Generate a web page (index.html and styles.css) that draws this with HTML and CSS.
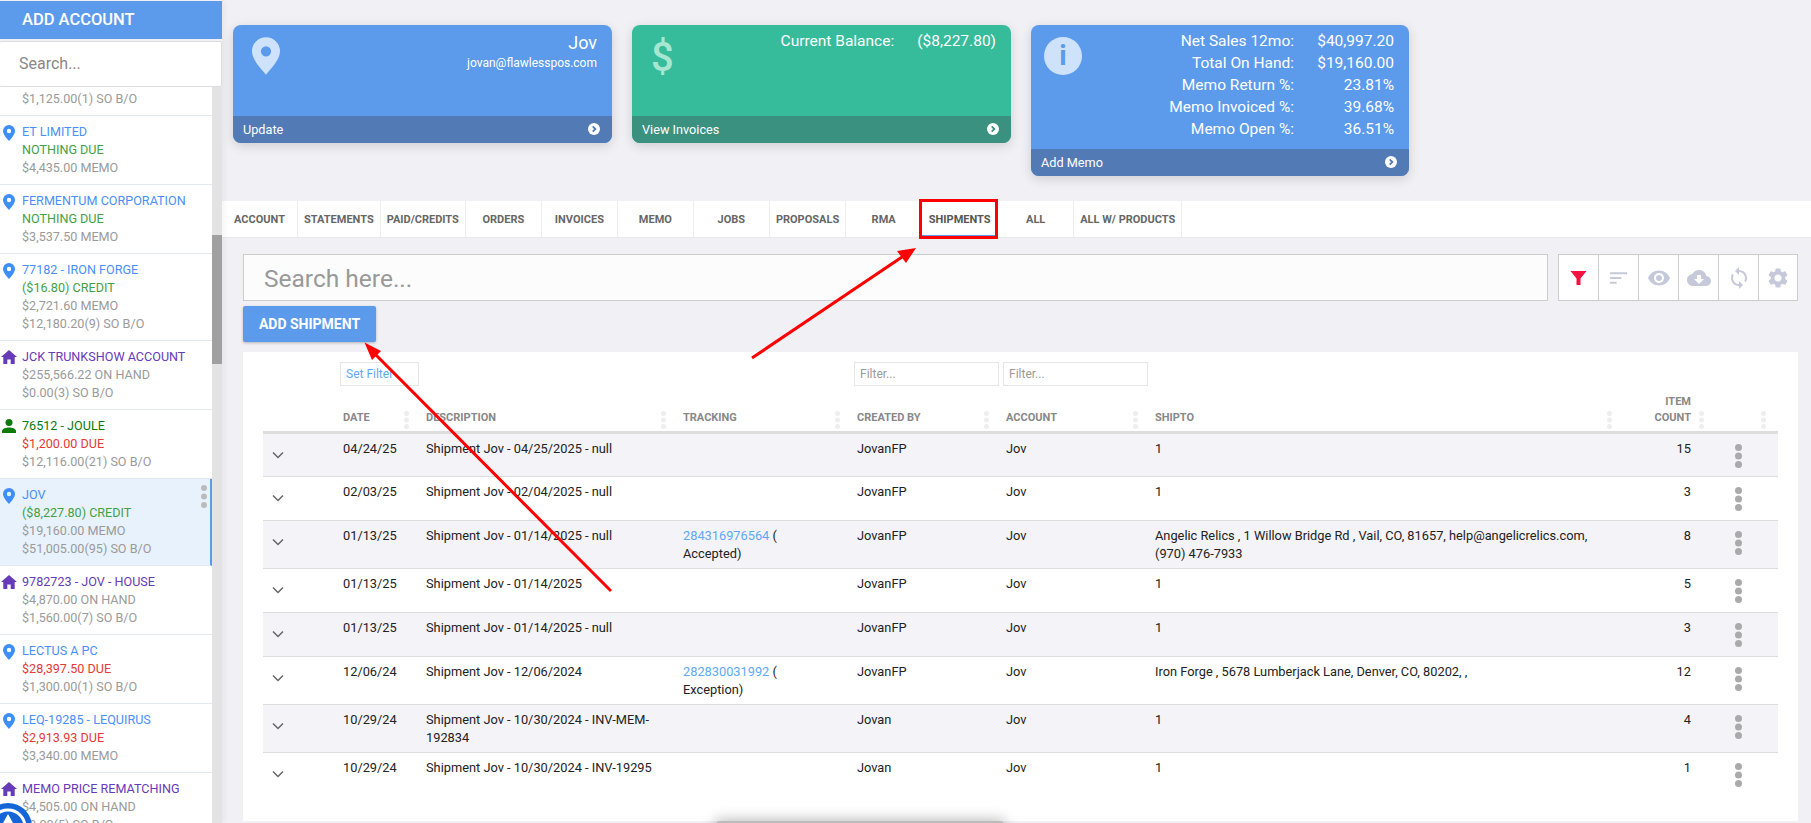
FILE: index.html
```html
<!DOCTYPE html>
<html lang="en">
<head>
<meta charset="utf-8">
<title>Shipments</title>
<link rel="stylesheet" href="styles.css">
</head>
<body>
<svg class="defs" width="0" height="0" aria-hidden="true">
  <symbol id="pin" viewBox="0 0 12 16"><path fill-rule="evenodd" d="M6 0a6 6 0 0 0-6 6c0 3.6 4 7.6 6 10 2-2.4 6-6.4 6-10a6 6 0 0 0-6-6zm0 3.8a2.2 2.2 0 1 1 0 4.4 2.2 2.2 0 0 1 0-4.4z"/></symbol>
  <symbol id="house" viewBox="0 0 16 14"><path d="M8 0 0 7h2.300v7h4V9.500h3.400V14h4V7H16z"/></symbol>
  <symbol id="person" viewBox="0 0 16 14"><circle cx="8" cy="3.500" r="3.500"/><path d="M1 14v-2c0-2.500 4.500-3.500 7-3.500s7 1 7 3.500v2z"/></symbol>
  <symbol id="go" viewBox="0 0 12 12"><circle cx="6" cy="6" r="6" fill="#fff"/><path d="M4.700 3.300 7.400 6 4.700 8.700" fill="none" stroke="currentColor" stroke-width="1.800"/></symbol>
  <symbol id="chev" viewBox="0 0 12 8"><path d="M1 1.500 6 6.500 11 1.500" fill="none" stroke="#666" stroke-width="1.500"/></symbol>
</svg>

<div class="app">
  <aside class="side">
    <div class="side-add">ADD ACCOUNT</div>
    <div class="side-search">Search...</div>
    <div class="side-body">
      <ul class="acct-list">
        <li class="acct acct-cut"><span class="g">$1,125.00(1) SO B/O</span></li>
        <li class="acct"><svg class="ai pin"><use href="#pin"/></svg><span class="b">ET LIMITED</span><span class="n">NOTHING DUE</span><span class="g">$4,435.00 MEMO</span></li>
        <li class="acct"><svg class="ai pin"><use href="#pin"/></svg><span class="b">FERMENTUM CORPORATION</span><span class="n">NOTHING DUE</span><span class="g">$3,537.50 MEMO</span></li>
        <li class="acct"><svg class="ai pin"><use href="#pin"/></svg><span class="b">77182 - IRON FORGE</span><span class="n">($16.80) CREDIT</span><span class="g">$2,721.60 MEMO</span><span class="g">$12,180.20(9) SO B/O</span></li>
        <li class="acct"><svg class="ai home"><use href="#house"/></svg><span class="p">JCK TRUNKSHOW ACCOUNT</span><span class="g">$255,566.22 ON HAND</span><span class="g">$0.00(3) SO B/O</span></li>
        <li class="acct"><svg class="ai user"><use href="#person"/></svg><span class="dg">76512 - JOULE</span><span class="r">$1,200.00 DUE</span><span class="g">$12,116.00(21) SO B/O</span></li>
        <li class="acct active"><svg class="ai pin"><use href="#pin"/></svg><span class="b">JOV</span><span class="n">($8,227.80) CREDIT</span><span class="g">$19,160.00 MEMO</span><span class="g">$51,005.00(95) SO B/O</span><i class="acct-dots"></i></li>
        <li class="acct"><svg class="ai home"><use href="#house"/></svg><span class="p">9782723 - JOV - HOUSE</span><span class="g">$4,870.00 ON HAND</span><span class="g">$1,560.00(7) SO B/O</span></li>
        <li class="acct"><svg class="ai pin"><use href="#pin"/></svg><span class="b">LECTUS A PC</span><span class="r">$28,397.50 DUE</span><span class="g">$1,300.00(1) SO B/O</span></li>
        <li class="acct"><svg class="ai pin"><use href="#pin"/></svg><span class="b">LEQ-19285 - LEQUIRUS</span><span class="r">$2,913.93 DUE</span><span class="g">$3,340.00 MEMO</span></li>
        <li class="acct"><svg class="ai home"><use href="#house"/></svg><span class="p">MEMO PRICE REMATCHING</span><span class="g">$4,505.00 ON HAND</span><span class="g">$0.00(5) SO B/O</span></li>
      </ul>
      <div class="scroll"><div class="thumb"></div></div>
    </div>
  </aside>

  <main class="main">
    <section class="cards">
      <article class="card blue">
        <div class="card-top">
          <svg class="card-pin"><use href="#pin"/></svg>
          <div class="card-who"><div class="who-name">Jov</div><div class="who-mail">jovan@flawlesspos.com</div></div>
        </div>
        <div class="card-foot"><span>Update</span><svg class="go"><use href="#go"/></svg></div>
      </article>
      <article class="card green">
        <div class="card-top">
          <span class="card-dollar">$</span>
          <div class="stat-grid bal"><span>Current Balance:</span><span>($8,227.80)</span></div>
        </div>
        <div class="card-foot"><span>View Invoices</span><svg class="go"><use href="#go"/></svg></div>
      </article>
      <article class="card blue">
        <div class="card-top">
          <span class="card-info">i</span>
          <div class="stat-grid">
            <span>Net Sales 12mo:</span><span>$40,997.20</span>
            <span>Total On Hand:</span><span>$19,160.00</span>
            <span>Memo Return %:</span><span>23.81%</span>
            <span>Memo Invoiced %:</span><span>39.68%</span>
            <span>Memo Open %:</span><span>36.51%</span>
          </div>
        </div>
        <div class="card-foot"><span>Add Memo</span><svg class="go"><use href="#go"/></svg></div>
      </article>
    </section>

    <nav class="tabs">
      <a class="tab">ACCOUNT</a><a class="tab">STATEMENTS</a><a class="tab">PAID/CREDITS</a><a class="tab">ORDERS</a><a class="tab">INVOICES</a><a class="tab">MEMO</a><a class="tab">JOBS</a><a class="tab">PROPOSALS</a><a class="tab">RMA</a><a class="tab on">SHIPMENTS</a><a class="tab">ALL</a><a class="tab">ALL W/ PRODUCTS</a>
    </nav>

    <section class="work">
      <div class="tools">
        <div class="bigsearch">Search here...</div>
        <div class="toolbar">
          <span class="tool"><svg class="ti red" viewBox="0 0 16 16"><path d="M0 1h16L10 8.500V15H6V8.500z"/></svg></span>
          <span class="tool"><svg class="ti" viewBox="0 0 18 14"><path d="M0 1h18v2H0zM0 6h12v2H0zM0 11h7v2H0z"/></svg></span>
          <span class="tool"><svg class="ti wide" viewBox="0 0 24 24"><path d="M12 4.500C7 4.500 2.730 7.610 1 12c1.730 4.390 6 7.500 11 7.500s9.270-3.110 11-7.500c-1.730-4.390-6-7.500-11-7.500zM12 17c-2.760 0-5-2.240-5-5s2.240-5 5-5 5 2.240 5 5-2.240 5-5 5zm0-8c-1.660 0-3 1.340-3 3s1.340 3 3 3 3-1.340 3-3-1.340-3-3-3z"/></svg></span>
          <span class="tool"><svg class="ti wide" viewBox="0 0 24 24"><path d="M19.350 10.040C18.670 6.590 15.640 4 12 4 9.110 4 6.600 5.640 5.350 8.040 2.340 8.360 0 10.910 0 14c0 3.310 2.690 6 6 6h13c2.760 0 5-2.240 5-5 0-2.640-2.050-4.780-4.650-4.960zM17 13l-5 5-5-5h3V9h4v4h3z"/></svg></span>
          <span class="tool"><svg class="ti wide" viewBox="0 0 24 24"><path d="M12 4V1L8 5l4 4V6c3.310 0 6 2.690 6 6 0 1.010-.25 1.970-.7 2.800l1.460 1.460C19.540 15.030 20 13.570 20 12c0-4.420-3.580-8-8-8zm0 14c-3.310 0-6-2.690-6-6 0-1.010.25-1.970.7-2.800L5.240 7.740C4.460 8.970 4 10.430 4 12c0 4.420 3.580 8 8 8v3l4-4-4-4v3z"/></svg></span>
          <span class="tool"><svg class="ti wide" viewBox="0 0 24 24"><path d="M19.140 12.940c.04-.3.06-.61.06-.94 0-.32-.02-.64-.07-.94l2.030-1.580c.18-.14.23-.41.12-.61l-1.920-3.320c-.12-.22-.37-.29-.59-.22l-2.390.96c-.5-.38-1.030-.7-1.620-.94l-.36-2.540c-.04-.24-.24-.41-.48-.41h-3.840c-.24 0-.43.17-.47.41l-.36 2.540c-.59.24-1.130.57-1.620.94l-2.390-.96c-.22-.08-.47 0-.59.22L2.740 8.870c-.12.21-.08.47.12.61l2.030 1.580c-.05.3-.09.63-.09.94s.02.64.07.94l-2.030 1.580c-.18.14-.23.41-.12.61l1.920 3.320c.12.22.37.29.59.22l2.390-.96c.5.38 1.030.7 1.620.94l.36 2.540c.05.24.24.41.48.41h3.840c.24 0 .44-.17.47-.41l.36-2.540c.59-.24 1.130-.56 1.620-.94l2.390.96c.22.08.47 0 .59-.22l1.920-3.320c.12-.22.07-.47-.12-.61l-2.010-1.580zM12 15.600c-1.980 0-3.600-1.620-3.600-3.600s1.620-3.600 3.600-3.600 3.600 1.620 3.600 3.600-1.620 3.600-3.600 3.600z"/></svg></span>
        </div>
      </div>
      <button class="addbtn" type="button">ADD SHIPMENT</button>

      <div class="panel">
        <table class="grid">
          <colgroup><col class="c-x"><col class="c-date"><col class="c-desc"><col class="c-track"><col class="c-by"><col class="c-acct"><col class="c-ship"><col class="c-count"><col class="c-act"></colgroup>
          <thead>
            <tr class="filters">
              <th></th><th><span class="fbox setf">Set Filter</span></th><th></th><th></th><th><span class="fbox">Filter...</span></th><th><span class="fbox">Filter...</span></th><th></th><th></th><th></th>
            </tr>
            <tr class="heads">
              <th></th><th>DATE<i class="h"></i></th><th>DESCRIPTION<i class="h"></i></th><th>TRACKING<i class="h"></i></th><th>CREATED BY<i class="h"></i></th><th>ACCOUNT<i class="h"></i></th><th>SHIPTO<i class="h"></i></th><th class="num">ITEM<br>COUNT<i class="h"></i></th><th><i class="h last"></i></th>
            </tr>
          </thead>
          <tbody>
            <tr><td class="x"><svg class="chev"><use href="#chev"/></svg></td><td>04/24/25</td><td>Shipment Jov - 04/25/2025 - null</td><td></td><td>JovanFP</td><td>Jov</td><td>1</td><td class="num">15</td><td><i class="more"></i></td></tr>
            <tr><td class="x"><svg class="chev"><use href="#chev"/></svg></td><td>02/03/25</td><td>Shipment Jov - 02/04/2025 - null</td><td></td><td>JovanFP</td><td>Jov</td><td>1</td><td class="num">3</td><td><i class="more"></i></td></tr>
            <tr><td class="x"><svg class="chev"><use href="#chev"/></svg></td><td>01/13/25</td><td>Shipment Jov - 01/14/2025 - null</td><td><a class="lnk">284316976564</a> ( Accepted)</td><td>JovanFP</td><td>Jov</td><td>Angelic Relics , 1 Willow Bridge Rd , Vail, CO, 81657, help@angelicrelics.com, (970) 476-7933</td><td class="num">8</td><td><i class="more"></i></td></tr>
            <tr><td class="x"><svg class="chev"><use href="#chev"/></svg></td><td>01/13/25</td><td>Shipment Jov - 01/14/2025</td><td></td><td>JovanFP</td><td>Jov</td><td>1</td><td class="num">5</td><td><i class="more"></i></td></tr>
            <tr><td class="x"><svg class="chev"><use href="#chev"/></svg></td><td>01/13/25</td><td>Shipment Jov - 01/14/2025 - null</td><td></td><td>JovanFP</td><td>Jov</td><td>1</td><td class="num">3</td><td><i class="more"></i></td></tr>
            <tr><td class="x"><svg class="chev"><use href="#chev"/></svg></td><td>12/06/24</td><td>Shipment Jov - 12/06/2024</td><td><a class="lnk">282830031992</a> ( Exception)</td><td>JovanFP</td><td>Jov</td><td>Iron Forge , 5678 Lumberjack Lane, Denver, CO, 80202, ,</td><td class="num">12</td><td><i class="more"></i></td></tr>
            <tr><td class="x"><svg class="chev"><use href="#chev"/></svg></td><td>10/29/24</td><td>Shipment Jov - 10/30/2024 - INV-MEM-192834</td><td></td><td>Jovan</td><td>Jov</td><td>1</td><td class="num">4</td><td><i class="more"></i></td></tr>
            <tr class="lastrow"><td class="x"><svg class="chev"><use href="#chev"/></svg></td><td>10/29/24</td><td>Shipment Jov - 10/30/2024 - INV-19295</td><td></td><td>Jovan</td><td>Jov</td><td>1</td><td class="num">1</td><td><i class="more"></i></td></tr>
          </tbody>
        </table>
      </div>
    </section>
  </main>
</div>

<div class="fab"><svg viewBox="0 0 48 48"><circle cx="24" cy="24" r="17" fill="none" stroke="#fff" stroke-width="3"/><path d="M24 11l5 9h-10z" fill="#fff"/></svg></div>
<div class="toast-shadow"></div>

<svg class="marks" viewBox="0 0 1811 823" aria-hidden="true">
  <rect x="920.500" y="200.500" width="76" height="37" fill="none" stroke="#f00" stroke-width="3"/>
  <path d="M611 591 371 350" stroke="#f00" stroke-width="3" fill="none"/>
  <path d="M364.500 342.500 381 351 372 360z" fill="#f00"/>
  <path d="M752 358 905 255" stroke="#f00" stroke-width="3" fill="none"/>
  <path d="M916 248 897 251 906 263z" fill="#f00"/>
</svg>
</body>
</html>
```
FILE: styles.css
```css
* { box-sizing: border-box; }
html, body { margin: 0; height: 100%; overflow: hidden; }
body { background: #f0f0f5; font-family: Roboto, "Liberation Sans", sans-serif; color: #333; }
.defs { position: absolute; }
.app { display: flex; height: 823px; overflow: hidden; }

/* sidebar */
.side { width: 222px; flex: none; padding-top: 1px; display: flex; flex-direction: column; box-shadow: 2px 0 6px rgba(0,0,0,.05); z-index: 2; background: #f0f0f5; }
.side-add { height: 38px; background: #5c9bec; color: #fff; font-size: 16.500px; font-weight: 500; line-height: 38px; padding-left: 22px; }
.side-search { height: 46px; margin-top: 2px; background: #fff; border: 1px solid #ddd; border-left: 0; border-radius: 2px; font-size: 16px; line-height: 44px; padding-left: 19px; color: #888; }
.side-body { flex: 1; display: flex; min-height: 0; }
.acct-list { list-style: none; margin: 0; padding: 0; flex: 1; background: #fff; overflow: hidden; }
.acct { position: relative; padding: 7px 4px 7px 22px; border-bottom: 1px solid #e3e9ee; font-size: 12.600px; line-height: 18px; }
.acct span { display: block; white-space: nowrap; }
.acct-cut { padding-top: 3px; }
.active { background: #e8f2fd; border-right: 2px solid #5c9bec; }
.acct-dots { position: absolute; right: 3px; top: 6px; width: 6px; height: 6px; border-radius: 50%; background: #bbb; box-shadow: 0 8.500px 0 #bbb, 0 17px 0 #bbb; }
.ai { position: absolute; }
.ai.pin { left: 3px; top: 9px; width: 12px; height: 16px; fill: #3d8ef8; }
.ai.home { left: 1px; top: 9px; width: 16px; height: 14px; fill: #673ab7; }
.ai.user { left: 1px; top: 9px; width: 16px; height: 14px; fill: #0a7a0a; }
.b { color: #4a8ffb; }
.n { color: #43a047; }
.g { color: #9a9a9a; }
.p { color: #673ab7; }
.r { color: #e53935; }
.dg { color: #0a7a0a; }
.scroll { width: 10px; flex: none; background: #e3e3e3; }
.thumb { height: 129px; margin-top: 148px; background: #a0a0a0; }

/* main */
.main { flex: 1; min-width: 0; display: flex; flex-direction: column; }
.cards { display: flex; align-items: flex-start; gap: 20px; padding: 25px 0 0 11px; height: 201px; }
.card { width: 379px; border-radius: 8px; overflow: hidden; color: #fff; box-shadow: 0 3px 12px rgba(0,0,0,.14); }
.card:last-child { width: 378px; }
.blue { background: #5c9bec; }
.green { background: #37bc9b; }
.card-top { position: relative; display: flex; justify-content: flex-end; min-height: 91px; padding: 5px 15px 9px; }
.card-foot { height: 27px; display: flex; align-items: center; justify-content: space-between; padding: 0 12px 1px 10px; font-size: 12.700px; background: #527bb5; color: #fff; }
.green .card-foot { background: #3b9180; }
.go { width: 12px; height: 12px; color: #527bb5; }
.green .go { color: #3b9180; }
.card-pin { position: absolute; left: 19px; top: 12px; width: 28px; height: 38px; fill: #cfe2fb; }
.card-dollar { position: absolute; left: 19px; top: 9px; font-size: 40px; line-height: 48px; font-weight: 500; color: #a8e6d2; }
.card-info { position: absolute; left: 13px; top: 12px; width: 38px; height: 38px; border-radius: 50%; background: #cfe2fb; color: #5c9bec; font-size: 28px; font-weight: 700; line-height: 38px; text-align: center; }
.card-who { text-align: right; }
.who-name { font-size: 18px; line-height: 26px; }
.who-mail { font-size: 12px; line-height: 16px; margin-top: -1px; }
.stat-grid { display: grid; grid-template-columns: max-content 100px; font-size: 15.500px; line-height: 22px; text-align: right; }
.stat-grid.bal { column-gap: 23px; grid-template-columns: max-content max-content; }

/* tabs */
.tabs { display: flex; height: 37px; background: #fff; border-bottom: 1px solid #e8e8ec; }
.tab { min-width: 76px; padding: 0 6px; border-right: 1px solid #eee; font-size: 11px; font-weight: 700; line-height: 38px; text-align: center; color: #666; white-space: nowrap; }
.tab.on { color: #555; box-shadow: inset 0 -2px 0 #5c9bec; border-right-color: transparent; }

/* search row */
.work { padding: 16px 13px 0 21px; flex: 1; min-height: 0; }
.tools { display: flex; justify-content: space-between; }
.bigsearch { width: 1305px; height: 47px; padding-left: 20px; background: #fcfcfc; border: 1px solid #ccc; font-size: 24.500px; line-height: 47px; color: #999; }
.toolbar { display: flex; height: 47px; background: #fff; border: 1px solid #ccc; }
.tool { width: 40px; display: flex; align-items: center; justify-content: center; border-left: 1px solid #ccc; }
.tool:first-child { border-left: 0; width: 39px; }
.tool:last-child { width: 39px; }
.ti { width: 17px; height: 16px; fill: #c5c9d9; }
.ti.wide { width: 24px; height: 24px; }
.ti.red { fill: #f5123f; }
.addbtn { display: block; width: 133px; height: 36px; margin-top: 5px; border: 0; border-radius: 2px; background: #5c9bec; color: #fff; font: 700 14px/36px Roboto, sans-serif; box-shadow: 0 1px 3px rgba(0,0,0,.25); padding: 0; }

/* table panel */
.panel { margin-top: 10px; height: 469px; background: #fff; padding: 10px 20px 0; }
.grid { width: 1515px; border-collapse: collapse; table-layout: fixed; font-size: 12.800px; line-height: 18px; }
.c-x { width: 65px; } .c-date { width: 83px; } .c-desc { width: 257px; } .c-track { width: 174px; } .c-by { width: 149px; } .c-acct { width: 149px; } .c-ship { width: 474px; } .c-count { width: 92px; } .c-act { width: 72px; }
.filters th { height: 24px; padding: 0 0 0 12px; font-weight: 400; vertical-align: top; text-align: left; }
.fbox { display: block; height: 24px; width: 145px; margin-right: -5px; padding-left: 5px; border: 1px solid #e6e6e6; font-size: 12px; line-height: 23px; color: #999; background: #fff; }
.setf { width: 79px; color: #5ea9f5; }
.heads th { position: relative; height: 46px; padding: 0 15px 5px; vertical-align: bottom; text-align: left; font-size: 11px; font-weight: 700; line-height: 16px; color: #888; border-bottom: 3px solid #ddd; }
.heads th.num { text-align: right; }
.h { position: absolute; right: 2px; top: 25px; width: 5px; height: 5px; border-radius: 50%; background: #eee; box-shadow: 0 6.500px 0 #eee, 0 13px 0 #eee; }
.h.last { right: 12px; }
tbody td { padding: 6px 15px 5px; vertical-align: top; border-bottom: 1px solid #ddd; height: 44px; color: #222; font-weight: 400; }
tbody tr:nth-child(odd) { background: #f3f3f8; }
tbody td.num { text-align: right; }
tbody .lastrow td { border-bottom: 0; }
.chev { display: block; width: 12px; height: 8px; margin: 11px 0 0 -6px; }
td.x { padding-left: 15px; }
.lnk { color: #5ea9f5; }
.more { display: block; margin: 4px 0 0 14px; width: 7px; height: 7px; border-radius: 50%; background: #aaa; box-shadow: 0 8.500px 0 #aaa, 0 17px 0 #aaa; }

/* overlays */
.marks { position: fixed; left: 0; top: 0; width: 1811px; height: 823px; pointer-events: none; }
.fab { position: fixed; left: -16px; top: 803px; width: 48px; height: 48px; border-radius: 50%; background: #1565d8; z-index: 3; }
.fab svg { display: block; width: 48px; height: 48px; }
.toast-shadow { position: fixed; left: 715px; top: 821px; width: 290px; height: 10px; border-radius: 6px; background: #bbb; box-shadow: 0 0 14px 1px rgba(0,0,0,.3); }
```
